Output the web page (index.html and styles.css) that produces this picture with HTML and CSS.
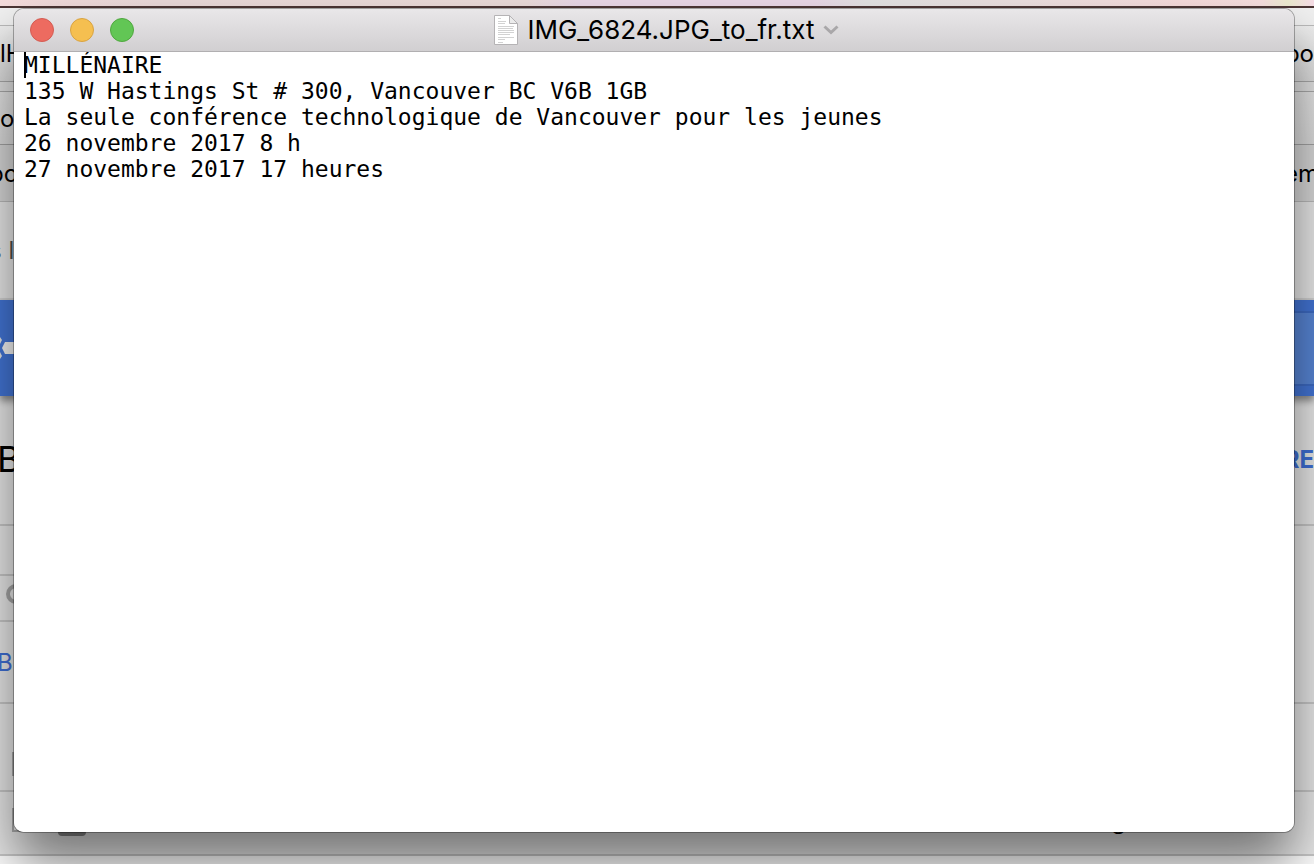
FILE: index.html
```html
<!DOCTYPE html>
<html lang="fr">
<head>
<meta charset="UTF-8" />
<meta name="viewport" content="width=device-width, initial-scale=1.0"/>
<title>IMG_6824.JPG_to_fr.txt</title>
<link rel="stylesheet" href="styles.css">
</head>

<body>

  <!-- Desktop and browser behind the window -->
  <div class="desktop"></div>
  <div class="browser">
    <div class="tabs"></div>
    <div class="toolbar"><span>lH</span><span>bo</span></div>
    <div class="gap"></div>
    <div class="address"><span>o</span></div>
    <div class="bookmarks"><span class="cut">bo</span><span class="cut-right">em</span></div>

    <div class="crumbs"><span class="cut">s l</span></div>
    <div class="banner">
      <svg class="logo" viewBox="0 0 14 36" width="14" height="36">
        <path d="M5 12h9v12h-9l-3-6z" fill="#f4f4f4"/>
        <path d="M-3 7h3l2 3-2 4h-3zM-3 22h3l2 4-2 3h-3z" fill="#e4e4e4"/>
      </svg>
      <div class="banner-search"></div>
    </div>
    <div class="heading"><span class="big">B</span><a href="#" class="action">RE</a></div>
    <div class="row short"></div>
    <div class="row filter">
      <svg viewBox="0 0 24 24" width="24" height="24"><circle cx="10" cy="12" r="8" fill="none" stroke="#a6a6a6" stroke-width="4"/></svg>
    </div>
    <div class="row link-row"><a href="#">Br</a></div>
    <div class="row check-row"><i class="box"></i></div>
    <div class="row item-row"><i class="box"></i><i class="folder"></i><span class="item-name">g</span></div>
  </div>

  <!-- Text editor window -->
  <main class="window">
    <header class="titlebar">
      <div class="lights">
        <button class="light close" aria-label="Fermer"></button>
        <button class="light minimize" aria-label="Réduire"></button>
        <button class="light zoom" aria-label="Agrandir"></button>
      </div>
      <div class="title">
        <svg class="doc" viewBox="0 0 26 32" width="26" height="32">
          <path d="M1.500 1.500h15l8 8v21h-23z" fill="#fff" stroke="#b5b3b5"/>
          <path d="M16.500 1.500v8h8z" fill="#ececec" stroke="#b5b3b5"/>
          <path d="M5 4.500h3M5 7.500h8M5 9.500h7M5 12.500h16M5 14.500h15M5 16.500h16M5 18.500h16M5 20.500h12M5 23.500h16M5 25.500h7M5 28.500h5" stroke="#d2d2d2"/>
        </svg>
        <h1>IMG_6824.JPG_to_fr.txt</h1>
      </div>
      <button class="menu" aria-label="Options du document">
        <svg viewBox="0 0 16 10" width="16" height="10"><path d="M1.500 1.500L8 7.500l6.500-6" fill="none" stroke="#a9a7a9" stroke-width="3"/></svg>
      </button>
    </header>
    <div class="editor">
      <textarea aria-label="Texte du document" spellcheck="false">MILLÉNAIRE
135 W Hastings St # 300, Vancouver BC V6B 1GB
La seule conférence technologique de Vancouver pour les jeunes
26 novembre 2017 8 h
27 novembre 2017 17 heures</textarea>
      <i class="caret"></i>
    </div>
  </main>

</body>
</html>
```

FILE: styles.css
```css
:root {
  --line: #c8c8c8;
  --page: #e9e9e9;
}

* {
  box-sizing: border-box;
}

body {
  margin: 0;
  height: 100vh;
  overflow: hidden;
  position: relative;
  font-family: Inter, "Liberation Sans", sans-serif;
  font-size: 24px;
  color: #000;
}

a {
  color: #3f6fd6;
  text-decoration: none;
}

.desktop {
  height: 8px;
  background: linear-gradient(90deg, #f5dcdc, #ebdada 12%, #ecdcda 40%, #ead8e8 44%, #ead8e8 62%, #e4e4e4 66%, #f7dcdc 90%, #f8e0e0 96%, #ecebcf 98%, #f6dce6);
  border-bottom: 2px solid #4b3534;
}

/* Browser */
.browser {
  background: var(--page);
}

.browser > div {
  display: flex;
  justify-content: space-between;
  align-items: center;
}

.cut {
  margin-left: -11px;
}

.cut-right {
  margin-right: -5px;
}

.tabs {
  height: 18px;
  background: #f1f1f1;
  border-bottom: 1px solid #bbb;
}

.toolbar {
  height: 56px;
  background: linear-gradient(#efefef, #dedede);
  border-bottom: 1px solid #aaa;
}

.gap {
  height: 10px;
  background: #e3e3e3;
  border-bottom: 1px solid #aaa;
}

.address {
  height: 53px;
  background: linear-gradient(#e6e6e6, #dcdcdc);
  border-bottom: 1px solid #a3a3a3;
}

.bookmarks {
  height: 57px;
  background: #d8d8d8;
  border-bottom: 1px solid #bbb;
}

.crumbs {
  height: 98px;
  color: #4d4d4d;
  border-bottom: 2px solid #d5d5d5;
}

.banner {
  height: 96px;
  background: #4375d6;
  box-shadow: 0 5px 7px rgba(0, 0, 0, 0.4);
}

.banner-search {
  width: 50%;
  height: 75px;
  background: #5886d6;
  border-top: 2px solid #3d6bc4;
  border-bottom: 2px solid #3d6bc4;
}

.heading {
  height: 128px;
  border-bottom: 2px solid var(--line);
}

.browser > .heading {
  height: 130px;
  padding-bottom: 2px;
}

.big {
  margin-left: -3px;
  font-size: 36px;
}

.action {
  font-weight: bold;
}

.row {
  border-bottom: 2px solid var(--line);
}

.short {
  width: 50%;
  height: 50px;
}

.filter {
  width: 50%;
  height: 46px;
  padding: 0 0 8px 6px;
}

.link-row {
  height: 82px;
}

.link-row a {
  margin-left: -3px;
}

.check-row {
  height: 88px;
  padding: 34px 12px 0;
}

.item-row {
  height: 64px;
  padding: 0 188px 6px 12px;
}

.box {
  width: 24px;
  height: 24px;
  border: 2px solid #aaa;
}

.folder {
  width: 28px;
  height: 32px;
  margin: 0 auto 0 22px;
  background: #888;
  border-radius: 4px;
}

/* Window */
.window {
  position: absolute;
  inset: 9px 20px 32px 14px;
  display: flex;
  flex-direction: column;
  background: #fff;
  border-radius: 10px;
  box-shadow: 0 0 0 1px rgba(0, 0, 0, 0.3), 0 32px 54px rgba(0, 0, 0, 0.5);
  overflow: hidden;
}

.titlebar {
  height: 43px;
  display: grid;
  grid-template-columns: 1fr auto 1fr;
  align-items: center;
  padding: 0 16px;
  background: linear-gradient(#e9e7e9, #d1cfd1);
  border-bottom: 1px solid #b1afb1;
}

.lights {
  display: flex;
  gap: 16px;
}

.light {
  width: 24px;
  height: 24px;
  padding: 0;
  border: 1px solid;
  border-radius: 50%;
}

.close {
  background: #ed6b60;
  border-color: #d35c53;
}

.minimize {
  background: #f5bf50;
  border-color: #d8a342;
}

.zoom {
  background: #62c655;
  border-color: #50a73f;
}

.title {
  display: flex;
  align-items: center;
  gap: 8px;
}

.title h1 {
  margin: 0;
  font-size: 26px;
  font-weight: normal;
  line-height: 32px;
}

.menu {
  display: flex;
  justify-self: start;
  margin-left: 8px;
  padding: 0;
  border: none;
  background: none;
}

.editor {
  position: relative;
  flex: 1;
  display: flex;
}

.editor textarea {
  flex: 1;
  padding: 0 10px;
  border: none;
  outline: none;
  resize: none;
  background: #fff;
  color: #000;
  font-family: "DejaVu Sans Mono", monospace;
  font-size: 23px;
  line-height: 26px;
}

.caret {
  position: absolute;
  left: 10px;
  top: 0;
  width: 2px;
  height: 26px;
  background: #000;
}
```
